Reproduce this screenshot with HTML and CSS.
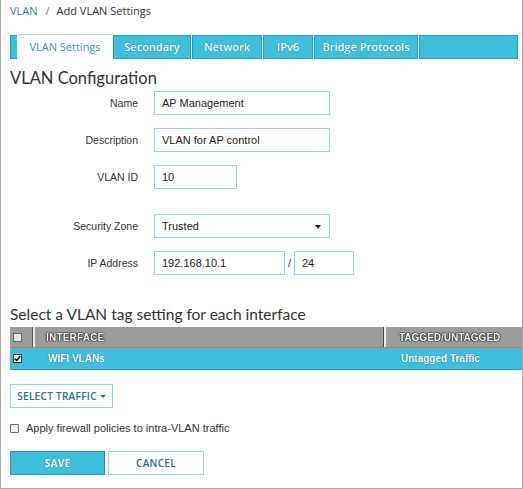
FILE: index.html
```html
<!DOCTYPE html>
<html>
<head>
<meta charset="utf-8">
<link rel="stylesheet" href="styles.css">
</head>
<body>
<div class="frame">
  <div class="crumbs"><a class="crumb-link">VLAN</a><span class="crumb-sep">/</span><span class="crumb-cur">Add VLAN Settings</span></div>

  <div class="tabs">
    <div class="tab tab-spacer"></div>
    <div class="tab tab-active w-vlan">VLAN Settings</div>
    <div class="tab w-sec">Secondary</div>
    <div class="tab w-net">Network</div>
    <div class="tab w-ipv6">IPv6</div>
    <div class="tab w-bridge">Bridge Protocols</div>
    <div class="tab tab-fill"></div>
  </div>

  <h2 class="heading h1">VLAN Configuration</h2>

  <div class="form">
    <div class="row">
      <div class="label">Name</div>
      <div class="input w-long">AP Management</div>
    </div>
    <div class="row">
      <div class="label">Description</div>
      <div class="input w-long">VLAN for AP control</div>
    </div>
    <div class="row row-gap">
      <div class="label">VLAN ID</div>
      <div class="input w-id">10</div>
    </div>
    <div class="row">
      <div class="label">Security Zone</div>
      <div class="input select w-long">Trusted<span class="caret"></span></div>
    </div>
    <div class="row">
      <div class="label">IP Address</div>
      <div class="input w-ip">192.168.10.1</div>
      <span class="slash">/</span>
      <div class="input w-mask">24</div>
    </div>
  </div>

  <h2 class="heading h2">Select a VLAN tag setting for each interface</h2>

  <div class="table">
    <div class="thead">
      <div class="cell c-check"><span class="cbox cbox-head"></span></div>
      <div class="cell c-iface">INTERFACE</div>
      <div class="cell c-tag">TAGGED/UNTAGGED</div>
    </div>
    <div class="trow">
      <div class="cell c-check"><span class="cbox cbox-on"><svg width="7" height="7" viewBox="0 0 7 7"><path d="M0.8 3.6 L2.7 5.6 L6.3 1" fill="none" stroke="#111" stroke-width="1.6"/></svg></span></div>
      <div class="cell c-iface">WIFI VLANs</div>
      <div class="cell c-tag">Untagged Traffic</div>
    </div>
  </div>

  <div class="btn btn-outline btn-select">SELECT TRAFFIC<span class="btn-caret"></span></div>

  <div class="check-line"><span class="cbox cbox-plain"></span><span class="check-text">Apply firewall policies to intra-VLAN traffic</span></div>

  <div class="actions">
    <div class="btn btn-save">SAVE</div>
    <div class="btn btn-outline btn-cancel">CANCEL</div>
  </div>
</div>
</body>
</html>
```

FILE: styles.css
```css
html, body {
  margin: 0;
  padding: 0;
  background: #ffffff;
}
.frame {
  width: 523px;
  height: 489px;
  box-sizing: border-box;
  border: 1px solid #ababab;
  border-top: none;
  padding-left: 9px;
  font-family: "Open Sans", "Liberation Sans", sans-serif;
  color: #333;
  overflow: hidden;
}
.crumbs {
  height: 22px;
  line-height: 22px;
  font-size: 11px;
}
.crumb-link { color: #2c7fb5; }
.crumb-sep { color: #777; margin: 0 7px 0 8px; }
.crumb-cur { color: #333; }

.tabs {
  display: flex;
  align-items: flex-end;
  height: 25px;
  margin-top: 12px;
  margin-right: 4px;
  gap: 1px;
}
.tab {
  box-sizing: border-box;
  height: 24px;
  background: #3ebfdb;
  border: 1px solid #1f9dc3;
  border-bottom-color: #2aa3c6;
  color: #ffffff;
  font-weight: 600;
  font-size: 11px;
  line-height: 22px;
  text-align: center;
  text-shadow: 0 0 1px rgba(0,60,90,0.7);
}
.tab-spacer { width: 7px; border-right: none; }
.tab-active {
  height: 25px;
  background: #ffffff;
  border: none;
  border-top: 1px solid #9fd9ec;
  color: #3b90c4;
  font-weight: 400;
  text-shadow: none;
  line-height: 23px;
}
.w-vlan { width: 94px; }
.w-sec { width: 78px; }
.w-net { width: 70px; }
.w-ipv6 { width: 50px; }
.w-bridge { width: 104px; }
.tab-fill { flex: 1; }

.heading {
  margin: 0;
  font-weight: 400;
  color: #333;
  font-family: "Lato", "Open Sans", sans-serif;
}
.h1 {
  font-size: 16.5px;
  line-height: 20px;
  margin-top: 9px;
}
.form { margin-top: 3px; }
.row {
  display: flex;
  align-items: center;
  height: 24px;
  margin-bottom: 13px;
}
.form .row-gap { margin-bottom: 25px; }
.label {
  width: 128px;
  text-align: right;
  margin-right: 16px;
  font-family: "Liberation Sans", Arial, sans-serif;
  font-size: 10.5px;
  color: #333;
}
.input {
  box-sizing: border-box;
  height: 24px;
  border: 1px solid #93d6ea;
  padding-left: 7px;
  line-height: 22px;
  font-family: "Liberation Sans", Arial, sans-serif;
  font-size: 11px;
  color: #222;
  position: relative;
}
.w-long { width: 176px; }
.w-id { width: 83px; }
.w-ip { width: 131px; }
.w-mask { width: 60px; }
.slash {
  width: 9px;
  text-align: center;
  font-family: "Liberation Sans", Arial, sans-serif;
  font-size: 11px;
  color: #333;
}
.caret {
  position: absolute;
  right: 8px;
  top: 10px;
  width: 0;
  height: 0;
  border-left: 3px solid transparent;
  border-right: 3px solid transparent;
  border-top: 4px solid #222;
}
.h2 {
  font-size: 15.5px;
  line-height: 20px;
  margin-top: 29px;
}
.table {
  margin-top: 3px;
  font-family: "Liberation Sans", Arial, sans-serif;
  font-size: 10px;
  font-weight: 700;
  color: #ffffff;
}
.thead {
  display: flex;
  height: 21px;
  box-sizing: border-box;
  background: #9c9c9c;
  border-bottom: 1px solid #c17a55;
  text-shadow: 0 0 1px #000, 0 0 1px #000, 0 0 1px #000, 0 0 1px #000;
}
.trow {
  display: flex;
  height: 22px;
  box-sizing: border-box;
  background: #3ebfdb;
  border-bottom: 1px solid #2c9cc0;
  text-shadow: 0 0 1px rgba(0,50,80,0.9);
}
.cell {
  display: flex;
  align-items: center;
  box-sizing: border-box;
}
.c-check { width: 25px; padding-left: 3px; }
.thead .c-check { border-right: 2px solid #ececec; box-shadow: inset -1px 0 0 #555; }
.c-iface { width: 351px; padding-left: 11px; }
.trow .c-iface { padding-left: 13px; }
.thead .c-iface { border-right: 2px solid #ececec; box-shadow: inset -1px 0 0 #444; letter-spacing: 0.2px; }
.c-tag { flex: 1; padding-left: 13px; }
.trow .c-tag { padding-left: 15px; }

.cbox {
  box-sizing: border-box;
  width: 9px;
  height: 9px;
  border: 1px solid #777;
  background: #f4f4f4;
  display: inline-flex;
  align-items: center;
  justify-content: center;
}
.cbox-head { background: #e6e6e6; border-color: #666; }
.cbox-on { background: #ffffff; border-color: #333; }

.btn {
  box-sizing: border-box;
  height: 24px;
  display: flex;
  align-items: center;
  justify-content: center;
  font-family: "Open Sans", "Liberation Sans", sans-serif;
  font-size: 10px;
  font-weight: 600;
  letter-spacing: 0.3px;
}
.btn-outline {
  border: 1px solid #95d6ea;
  background: #ffffff;
  color: #2b6d96;
}
.btn-select {
  width: 103px;
  margin-top: 14px;
}
.btn-caret {
  margin-left: 3px;
  width: 0;
  height: 0;
  border-left: 3px solid transparent;
  border-right: 3px solid transparent;
  border-top: 3px solid #2b6d96;
}
.check-line {
  display: flex;
  align-items: center;
  height: 16px;
  margin-top: 12px;
}
.cbox-plain {
  border-color: #666;
  background: #f0f0f0;
  border-radius: 1px;
}
.check-text {
  margin-left: 7px;
  font-family: "Liberation Sans", Arial, sans-serif;
  font-size: 11px;
  color: #333;
}
.actions {
  display: flex;
  gap: 3px;
  margin-top: 15px;
}
.btn-save {
  width: 95px;
  background: #3ebfdb;
  border: 1px solid #2597bb;
  color: #ffffff;
  font-weight: 700;
  text-shadow: 0 0 1px rgba(0,50,80,0.8);
}
.btn-cancel { width: 96px; }
```
